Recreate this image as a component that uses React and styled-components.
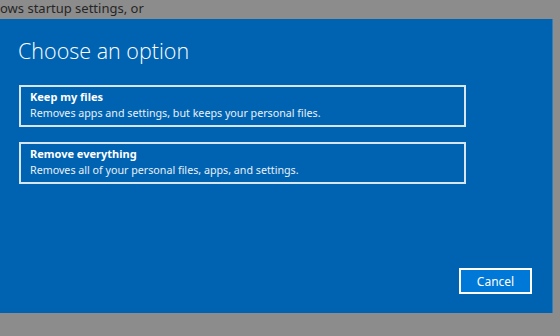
import React from "react";
import styled, { createGlobalStyle } from "styled-components";

const GlobalStyle = createGlobalStyle`
  html, body {
    margin: 0;
    padding: 0;
    background: #8c8c8c;
    width: 560px;
    height: 336px;
    overflow: hidden;
  }
  * { box-sizing: border-box; }
`;

const Page = styled.div`
  width: 560px;
  height: 336px;
  background: #8c8c8c;
  font-family: "Segoe UI", "Noto Sans", sans-serif;
`;

const BehindText = styled.div`
  height: 19px;
  overflow: hidden;
  color: #262626;
  font-size: 13px;
  line-height: 16px;
  padding-top: 0;
  white-space: nowrap;
`;

const Dialog = styled.div`
  width: 553px;
  height: 294px;
  background: #0063b1;
  border-right: 1px solid #2f7fc0;
  display: flex;
  flex-direction: column;
  padding: 18px 20px 19px 18px;
  color: #fff;
`;

const Title = styled.h1`
  margin: 0 0 20px;
  font-family: "Open Sans", "Noto Sans", sans-serif;
  font-weight: 300;
  font-size: 21.5px;
  line-height: 28px;
`;

const Options = styled.div`
  display: flex;
  flex-direction: column;
  gap: 15px;
  padding-left: 1px;
`;

const Option = styled.button`
  width: 447px;
  height: 42px;
  border: 2px solid #d6e6f4;
  background: transparent;
  color: #fff;
  text-align: left;
  padding: 3px 9px 0;
  font-family: inherit;
  display: flex;
  flex-direction: column;
  cursor: pointer;
`;

const OptionTitle = styled.span`
  font-size: 11px;
  font-weight: 700;
  line-height: 14px;
`;

const OptionText = styled.span`
  font-size: 10.7px;
  line-height: 18px;
  color: #e8f0f8;
`;

const Footer = styled.div`
  margin-top: auto;
  display: flex;
  justify-content: flex-end;
`;

const CancelButton = styled.button`
  width: 73px;
  height: 26px;
  background: #0078d7;
  border: 2px solid #ffffff;
  color: #fff;
  font-family: inherit;
  font-size: 12px;
  padding: 0;
  cursor: pointer;
`;

export default function App() {
  return (
    <Page>
      <GlobalStyle />
      <BehindText>ows startup settings, or</BehindText>
      <Dialog>
        <Title>Choose an option</Title>
        <Options>
          <Option>
            <OptionTitle>Keep my files</OptionTitle>
            <OptionText>Removes apps and settings, but keeps your personal files.</OptionText>
          </Option>
          <Option>
            <OptionTitle>Remove everything</OptionTitle>
            <OptionText>Removes all of your personal files, apps, and settings.</OptionText>
          </Option>
        </Options>
        <Footer>
          <CancelButton>Cancel</CancelButton>
        </Footer>
      </Dialog>
    </Page>
  );
}
